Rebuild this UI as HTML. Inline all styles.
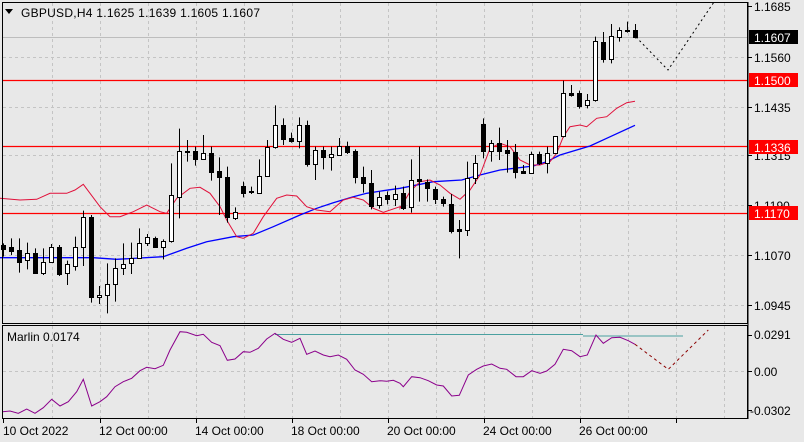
<!DOCTYPE html>
<html><head><meta charset="utf-8"><style>
html,body{margin:0;padding:0;background:#e8e8e8;width:804px;height:442px;overflow:hidden}
svg{display:block;font-family:"Liberation Sans",sans-serif}
</style></head><body>
<svg id="s" width="804" height="442" viewBox="0 0 804 442" xmlns="http://www.w3.org/2000/svg">
<rect x="0" y="0" width="804" height="442" fill="#e8e8e8"/>
<g id="grid" stroke="#c4c4c4" stroke-dasharray="3,3" stroke-width="1"></g>
<g id="lines"></g>
<g id="candles"></g>
<rect x="2.5" y="2.5" width="745" height="321" fill="none" stroke="#000"/>
<rect x="2.5" y="325.5" width="745" height="93" fill="none" stroke="#000"/>
<g font-size="12" fill="#000">
<path d="M5 9 L13 9 L9 14 Z" fill="#000"/>
<text x="21" y="17" textLength="239" lengthAdjust="spacing">GBPUSD,H4  1.1625 1.1639 1.1605 1.1607</text>
<text x="7" y="341">Marlin 0.0174</text>
<text x="754" y="11">1.1685</text>
<text x="754" y="62">1.1560</text>
<text x="754" y="112">1.1435</text>
<text x="754" y="160">1.1315</text>
<text x="754" y="210">1.1190</text>
<text x="754" y="260">1.1070</text>
<text x="754" y="310">1.0945</text>
<rect x="749" y="30" width="49" height="14" fill="#000"/>
<text x="754" y="42" fill="#fff">1.1607</text>
<rect x="749" y="73" width="49" height="14" fill="#f00"/>
<text x="754" y="85" fill="#fff">1.1500</text>
<rect x="749" y="140" width="49" height="14" fill="#f00"/>
<text x="754" y="152" fill="#fff">1.1336</text>
<rect x="749" y="206" width="49" height="14" fill="#f00"/>
<text x="754" y="218" fill="#fff">1.1170</text>
<text x="754" y="339">0.0291</text>
<text x="754" y="376">0.00</text>
<text x="750" y="415">-0.0302</text>
<text x="3" y="435">10 Oct 2022</text>
<text x="99" y="435">12 Oct 00:00</text>
<text x="195" y="435">14 Oct 00:00</text>
<text x="291" y="435">18 Oct 00:00</text>
<text x="387" y="435">20 Oct 00:00</text>
<text x="483" y="435">24 Oct 00:00</text>
<text x="579" y="435">26 Oct 00:00</text>
</g>
<g stroke="#000">
<line x1="748" y1="2" x2="748" y2="419"/>
</g>
</svg>
<script>
var NS="http://www.w3.org/2000/svg";
function el(p,t,a){var e=document.createElementNS(NS,t);for(var k in a)e.setAttribute(k,a[k]);document.getElementById(p).appendChild(e);return e;}
for(var x=52;x<748;x+=48){el("grid","line",{x1:x+.5,y1:3,x2:x+.5,y2:323});el("grid","line",{x1:x+.5,y1:326,x2:x+.5,y2:418});}
[57,107,155,205,255,305].forEach(function(y){el("grid","line",{x1:3,y1:y+.5,x2:748,y2:y+.5});});
el("grid","line",{x1:3,y1:371.5,x2:748,y2:371.5});
[3,100,196,292,388,484,580,676].forEach(function(x){el("lines","line",{x1:x+.5,y1:419,x2:x+.5,y2:423,stroke:"#000"});});
[6,57,107,155,205,255,305,335,371,410].forEach(function(y){el("lines","line",{x1:748,y1:y+.5,x2:752,y2:y+.5,stroke:"#000"});});
el("lines","line",{x1:3,y1:37.5,x2:748,y2:37.5,stroke:"#bdbdbd"});
[80.5,146.5,213.5].forEach(function(y){el("lines","line",{x1:3,y1:y,x2:748,y2:y,stroke:"#f00","stroke-width":1.3});});
function pl(pts,ox,oy,sc,st,w,dash){var s=pts.map(function(p){return (ox+p[0]/sc).toFixed(1)+","+(oy+p[1]/sc).toFixed(1)}).join(" ");var a={points:s,fill:"none",stroke:st,"stroke-width":w};if(dash)a["stroke-dasharray"]=dash;el("lines","polyline",a);}
var red1=[[0,595],[60,600],[110,598],[150,580],[200,580],[225,570],[250,553],[300,620],[330,650],[360,650],[400,635],[440,615],[480,635],[500,640],[530,595],[570,565],[600,562],[630,580],[660,620],[680,660],[710,710],[730,715],[760,700],[790,650],[830,595],[860,585],[890,588],[920,620],[950,630],[990,635],[1030,600],[1060,592],[1090,600],[1120,625],[1150,637],[1200,620]];
var red2=[[0,625],[30,575],[60,545],[90,540],[120,555],[150,580],[180,598],[210,570],[240,525],[270,445],[300,430],[330,440],[360,480],[390,495],[420,495],[450,485],[470,460],[490,410],[510,380],[540,375],[560,380],[590,355],[620,350],[650,325],[680,308],[705,304]];
var blue1=[[0,773],[280,773],[350,778],[490,770],[560,745],[620,725],[700,710],[760,705],[820,680],[900,645],[950,625],[1000,608],[1060,590],[1100,580],[1150,572],[1200,565]];
var blue2=[[0,565],[100,545],[185,540],[240,525],[300,510],[400,498],[440,485],[480,465],[570,438],[620,415],[705,376]];
pl(blue1.concat(blue2.map(function(p){return [p[0]+1200,p[1]]})),0,0,3,"#0000ff",1.3);
pl(red1.concat(red2.map(function(p){return [p[0]+1200,p[1]]})),0,0,3,"#e0103a",1);
pl([[636,37],[668,70],[714,2]],0,0,1,"#000",1,"2,3");
var m1=[[8,305],[30,303],[55,310],[80,297],[105,310],[130,293],[155,268],[180,288],[205,275],[230,245],[250,208],[275,288],[300,275],[320,260],[345,230],[370,215],[395,205],[420,182],[440,172],[465,176],[490,166],[510,120],[540,65],[560,67],[590,77],[610,73],[635,97],[660,107],[682,151],[705,147],[730,125],[750,127],[775,115],[800,87],[825,70],[850,88],[875,97],[900,85],[920,133],[945,123],[970,135],[990,140],[1015,135],[1040,148],[1065,180],[1090,193],[1115,215],[1140,212],[1160,214],[1180,211],[1200,220]];
var m2=[[10,230],[35,200],[60,203],[85,212],[110,225],[130,228],[155,258],[178,256],[205,195],[230,178],[250,168],[275,162],[300,175],[320,178],[348,200],[370,200],[395,182],[420,190],[440,183],[465,163],[490,118],[515,122],[540,140],[562,135],[588,75],[610,100],[635,83],[660,82],[685,92],[705,103]];
el("lines","line",{x1:275,y1:334.5,x2:583,y2:334.5,stroke:"#4aa0a0"});
el("lines","line",{x1:583,y1:336,x2:683,y2:336,stroke:"#4aa0a0"});
pl(m1.concat(m2.map(function(p){return [p[0]+1200,p[1]]})),0,310,3,"#8b008b",1);
pl([[705,103],[805,178],[925,60]].map(function(p){return [p[0]+1200,p[1]]}),0,310,3,"#8b0000",1,"3,3");
var c=[[730,735,748,770,0],[715,742,752,765,0],[715,750,785,818,0],[728,760,780,808,1],[745,760,818,818,0],[745,785,818,825,1],[732,742,785,788,1],[735,742,822,828,0],[782,793,820,855,1],[710,742,797,812,1],[632,652,742,798,1],[645,652,892,908,0],[858,885,892,912,1],[790,853,885,940,1],[775,805,853,905,1],[730,793,805,825,1],[728,773,790,822,1],[685,730,773,775,1],[702,712,730,738,1],[710,715,740,742,0],[718,724,742,778,1],[490,586,724,728,1],[386,452,590,655,1],[420,452,455,485,0],[440,453,478,497,0],[405,460,476,480,1],[440,460,515,542,0],[472,514,532,645,0],[500,532,652,668,0],[622,635,655,660,1],[545,558,578,592,0],[560,573,577,582,0],[478,527,578,578,1],[420,440,527,527,1],[316,376,440,446,1],[355,376,416,435,0],[398,414,422,428,0],[352,376,422,445,1],[362,376,493,500,0],[440,450,493,540,1],[440,450,470,508,0],[440,462,470,512,1],[414,437,464,466,1],[425,437,455,462,0],[448,453,530,550,0],[500,532,550,578,0],[510,550,617,628,0],[575,590,616,626,1],[574,585,597,613,0],[557,582,597,618,1],
[560,580,625,630,0],[478,540,622,638,1],[440,537,542,605,0],[538,545,565,605,0],[560,567,598,612,0],[590,598,610,620,0],[582,612,692,700,0],[660,688,692,775,0],[485,535,690,708,1],[465,490,535,552,1],[355,372,452,475,0],[420,428,452,485,1],[383,428,452,480,0],[420,450,458,518,0],[432,455,515,535,0],[495,513,518,522,0],[455,462,518,518,1],[455,462,488,495,0],[440,460,488,520,1],[408,408,460,462,1],[242,280,408,412,1],[255,280,285,290,0],[272,280,318,326,0],[282,300,316,325,1],[110,122,300,305,1],[96,125,176,188,0],[72,108,176,190,1],[82,90,110,125,1],[65,90,94,98,1],[72,90,112,115,0]];
c.forEach(function(d,i){var x=Math.round(3+8*i)+.5;
el("candles","line",{x1:x,y1:d[0]/3,x2:x,y2:d[3]/3,stroke:"#000"});
var t=Math.round(d[1]/3),b=Math.round(d[2]/3);if(b-t<1)b=t+1;
el("candles","rect",{x:x-2,y:t+.5,width:4,height:b-t,fill:d[4]?"#fff":"#000",stroke:"#000"});});
</script>
</body></html>
